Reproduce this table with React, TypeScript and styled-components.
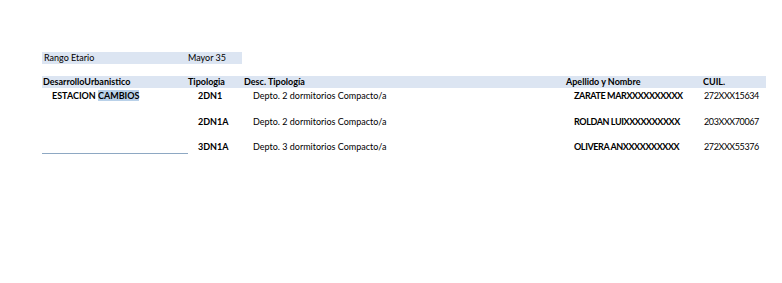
import styled, { createGlobalStyle } from 'styled-components';

const COLS = `146px 56px 322px 136px 66px`

const GlobalStyle = createGlobalStyle`
  body {
    margin: 0;
    background: #ffffff;
    font-family: Lato, "Open Sans", sans-serif;
    color: #000;
  }
`

const Page = styled.div`
  width: 782px;
  height: 283px;
  padding: 52px 0 0 42px;
  box-sizing: border-box;
  font-size: 9px;
`

const RangeBar = styled.div`
  width: 200px;
  height: 12px;
  line-height: 12px;
  background: #dce5f2;
  display: grid;
  grid-template-columns: 146px 1fr;
`

const RangeCell = styled.span<{ $pad?: number }>`
  padding-left: ${p => p.$pad ?? 0}px;
  white-space: nowrap;
`

const Table = styled.div`
  margin-top: 12px;
  width: 724px;
`

const HeaderRow = styled.div`
  display: grid;
  grid-template-columns: ${COLS};
  height: 12px;
  line-height: 12px;
  background: #dce5f2;
  font-weight: 700;
`

const DataRow = styled.div`
  display: grid;
  grid-template-columns: ${COLS};
  height: 25.5px;
  padding-top: 2px;
  box-sizing: border-box;
  line-height: 12px;
`

const Cell = styled.div<{ $pad?: number; $bold?: boolean; $tight?: boolean; $underline?: boolean }>`
  padding-left: ${p => p.$pad ?? 0}px;
  font-weight: ${p => (p.$bold ? 700 : 'inherit')};
  letter-spacing: ${p => (p.$tight ? '-0.4px' : 'normal')};
  white-space: nowrap;
  height: 12px;
  ${p => p.$underline && `border-bottom: 1px solid #8ea8c3;`}
`

const Mark = styled.span`
  background: #b9d1e9;
`

const rows = [
  { dev: 'ESTACION', tip: '2DN1', desc: 'Depto. 2 dormitorios Compacto/a', name: 'ZARATE MARXXXXXXXXXX', cuil: '272XXX15634' },
  { dev: '', tip: '2DN1A', desc: 'Depto. 2 dormitorios Compacto/a', name: 'ROLDAN LUIXXXXXXXXXX', cuil: '203XXX70067' },
  { dev: '', tip: '3DN1A', desc: 'Depto. 3 dormitorios Compacto/a', name: 'OLIVERA ANXXXXXXXXXX', cuil: '272XXX55376' },
]

const App = () => {
  return (
    <Page>
      <GlobalStyle />
      <RangeBar>
        <RangeCell $pad={2}>Rango Etario</RangeCell>
        <RangeCell $pad={0}>Mayor 35</RangeCell>
      </RangeBar>
      <Table>
        <HeaderRow>
          <Cell $pad={1}>DesarrolloUrbanistico</Cell>
          <Cell $pad={0}>Tipologia</Cell>
          <Cell $pad={0}>Desc. Tipología</Cell>
          <Cell $pad={0}>Apellido y Nombre</Cell>
          <Cell $pad={1}>CUIL.</Cell>
        </HeaderRow>
        {rows.map((r, i) => (
          <DataRow key={r.tip}>
            <Cell $pad={10} $bold $underline={i === rows.length - 1}>
              {r.dev && <>{r.dev} <Mark>CAMBIOS</Mark></>}
            </Cell>
            <Cell $pad={10} $bold>{r.tip}</Cell>
            <Cell $pad={9}>{r.desc}</Cell>
            <Cell $pad={8} $bold $tight>{r.name}</Cell>
            <Cell $pad={2} $tight>{r.cuil}</Cell>
          </DataRow>
        ))}
      </Table>
    </Page>
  )
}

export default App;
